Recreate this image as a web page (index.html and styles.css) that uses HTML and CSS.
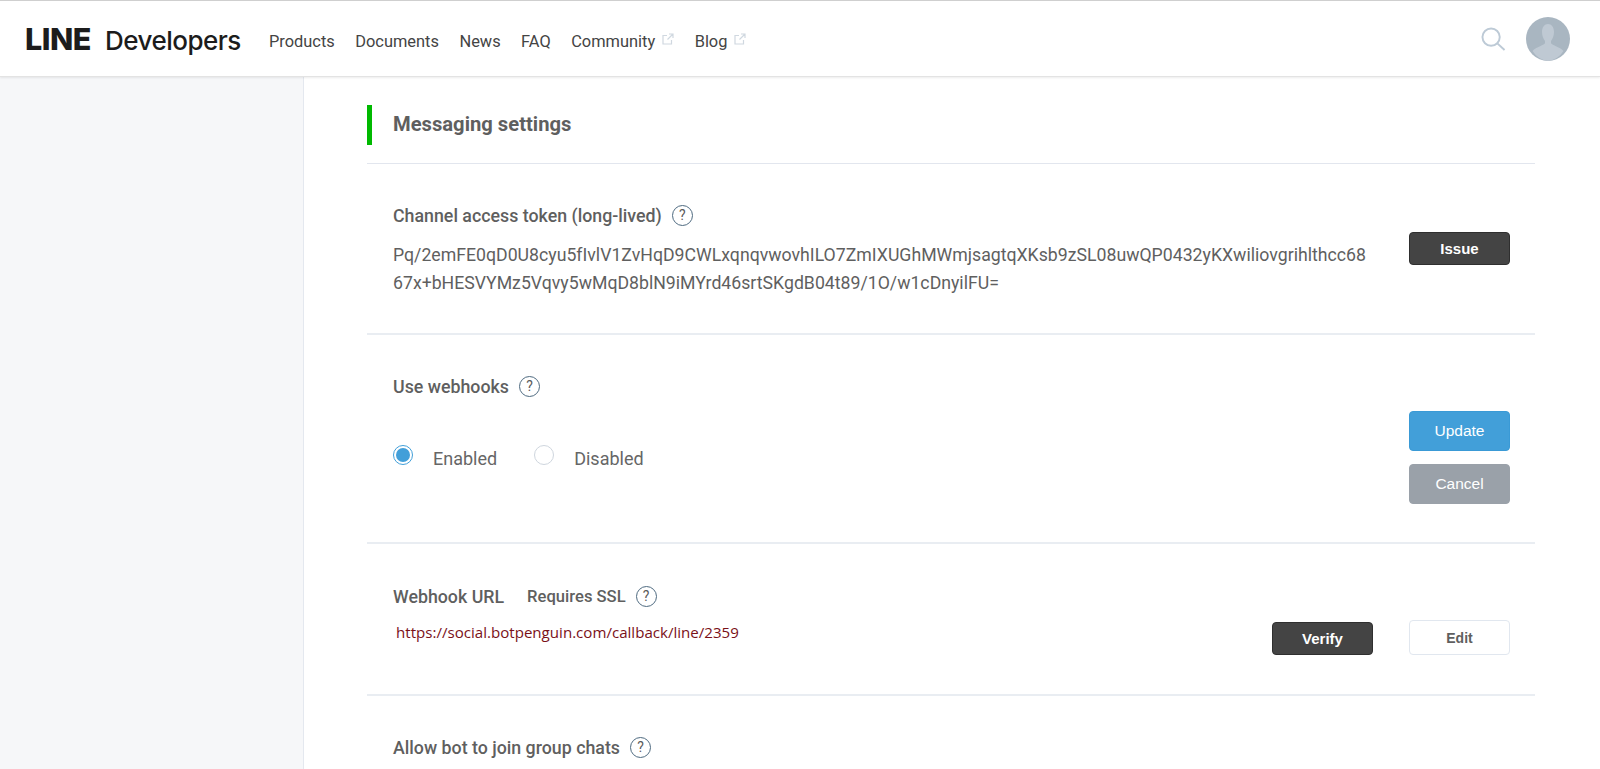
FILE: index.html
```html
<!DOCTYPE html>
<html lang="en">
<head>
<meta charset="utf-8">
<title>LINE Developers</title>
<link rel="stylesheet" href="styles.css">
</head>
<body>
<header class="topbar">
  <div class="brand"><span class="brand-line">LINE</span><span class="brand-dev">Developers</span></div>
  <nav class="nav">
    <a>Products</a>
    <a>Documents</a>
    <a>News</a>
    <a>FAQ</a>
    <a>Community<svg class="ext" viewBox="0 0 12 12"><path d="M5 2.500H1V11h8.500V7M7 1h4v4M11 1 5.500 6.500"/></svg></a>
    <a>Blog<svg class="ext" viewBox="0 0 12 12"><path d="M5 2.500H1V11h8.500V7M7 1h4v4M11 1 5.500 6.500"/></svg></a>
  </nav>
  <div class="top-right">
    <svg class="search" viewBox="0 0 26 26"><circle cx="10.500" cy="10.500" r="9"/><path d="m17 17 7.500 7"/></svg>
    <svg class="avatar" viewBox="0 0 44 44"><circle cx="22" cy="22" r="22" fill="#a9b6c1"/><path fill="#bfc9d3" d="M16 15c0-5 2.500-8 6-8s6 3 6 8c0 4-1.500 7-3 9v2c0 2 9 4 12.500 8A22 22 0 0 1 22 44 22 22 0 0 1 6.500 34C10 30 19 28 19 26v-2c-1.500-2-3-5-3-9z"/></svg>
  </div>
</header>
<div class="layout">
  <aside class="sidebar"></aside>
  <main class="main">
    <h2 class="section-title">Messaging settings</h2>

    <section class="row row-token">
      <div class="row-body">
        <div class="label">Channel access token (long-lived)<span class="help">?</span></div>
        <p class="token">Pq/2emFE0qD0U8cyu5fIvlV1ZvHqD9CWLxqnqvwovhILO7ZmIXUGhMWmjsagtqXKsb9zSL08uwQP0432yKXwiliovgrihlthcc68<br>67x+bHESVYMz5Vqvy5wMqD8blN9iMYrd46srtSKgdB04t89/1O/w1cDnyilFU=</p>
      </div>
      <div class="actions"><button class="btn btn-dark">Issue</button></div>
    </section>

    <section class="row row-hook">
      <div class="row-body">
        <div class="label">Use webhooks<span class="help">?</span></div>
        <div class="radios">
          <span class="radio radio-on"></span><span class="radio-text">Enabled</span>
          <span class="radio"></span><span class="radio-text">Disabled</span>
        </div>
      </div>
      <div class="actions actions-stack">
        <button class="btn btn-blue">Update</button>
        <button class="btn btn-gray">Cancel</button>
      </div>
    </section>

    <section class="row row-url">
      <div class="row-body">
        <div class="label">Webhook URL<span class="ssl">Requires SSL</span><span class="help">?</span></div>
        <p class="url">https://social.botpenguin.com/callback/line/2359</p>
      </div>
      <div class="actions actions-inline">
        <button class="btn btn-dark btn-verify">Verify</button>
        <button class="btn btn-light">Edit</button>
      </div>
    </section>

    <section class="row-last">
      <div class="label">Allow bot to join group chats<span class="help">?</span></div>
    </section>
  </main>
</div>
</body>
</html>
```

FILE: styles.css
```css
* { box-sizing: border-box; }
html, body { margin: 0; height: 769px; overflow: hidden; }
body { font-family: Roboto, "Liberation Sans", sans-serif; background: #fff; color: #5b5b5b; }

.topbar {
  height: 77px;
  border-top: 1px solid #cfcfcf;
  border-bottom: 1px solid #e3e3e3;
  box-shadow: 0 1px 2px rgba(0, 0, 0, .08);
  display: flex;
  align-items: center;
  padding: 0 30px 0 25px;
  background: #fff;
  position: relative;
}
.brand { display: flex; align-items: baseline; width: 244px; color: #1c1c1c; font-family: Inter, sans-serif; }
.brand-line { font-size: 30.5px; font-weight: 800; letter-spacing: -.5px; margin-right: 14px; }
.brand-dev { font-size: 26px; font-weight: 500; letter-spacing: -.5px; }
.nav { display: flex; gap: 20.5px; font-size: 16.4px; color: #444; padding-top: 5px; }
.nav a { display: flex; align-items: flex-start; }
.ext { width: 12px; height: 12px; margin: 1px 0 0 7px; fill: none; stroke: #d0d8e0; stroke-width: 1.200; }
.top-right { margin-left: auto; display: flex; align-items: center; gap: 20px; }
.search { width: 25px; height: 25px; margin-top: 2px; fill: none; stroke: #bdcad6; stroke-width: 2; }
.avatar { width: 44px; height: 44px; display: block; }

.layout { display: flex; height: 692px; }
.sidebar { width: 304px; background: #f6f7f9; border-right: 1px solid #e4e8ef; flex: none; }
.main { width: 1168px; margin-left: 63px; padding-top: 28px; }

.section-title {
  margin: 0 0 1px;
  height: 40px;
  line-height: 39px;
  border-left: 5px solid #00b900;
  padding-left: 21px;
  font-size: 20.200px;
  font-weight: 700;
  color: #5f5f5f;
}
.row { display: flex; justify-content: space-between; border-top: 1px solid #e2e6ee; padding: 0 25px 0 26px; }
.row-body { flex: 1; }
.row-token { margin-top: 18px; height: 170px; padding-top: 39px; }
.row-hook { height: 209px; padding-top: 39px; border-top-width: 2px; border-top-color: #e9edf2; }
.row-url { height: 152px; padding-top: 40px; border-top-width: 2px; border-top-color: #e9edf2; }
.row-last { border-top: 2px solid #e9edf2; padding: 39px 26px 0; }

.label { display: flex; align-items: center; font-size: 17.800px; font-weight: 500; height: 24px; color: #5f5f5f; }
.ssl { margin-left: 23px; font-size: 16.600px; }
.help {
  width: 21px;
  height: 21px;
  margin-left: 10px;
  border: 1.700px solid #4e6a80;
  border-radius: 50%;
  font-size: 14px;
  font-weight: 400;
  line-height: 18px;
  text-align: center;
  color: #5b5b5b;
}
.token { margin: 14px 0 0; font-size: 17.700px; line-height: 28px; color: #5f5f5f; white-space: nowrap; }
.radios { display: flex; align-items: center; margin-top: 46px; height: 28px; font-size: 18px; color: #666; }
.radio { width: 20px; height: 20px; border-radius: 50%; border: 1.200px solid #cfd6de; margin-top: -6px; background: #fff; flex: none; }
.radio-on { border-color: #429fd9; position: relative; }
.radio-on::after { content: ""; position: absolute; inset: 2px; border-radius: 50%; background: #429fd9; }
.radio-text { margin-left: 20px; margin-right: 37px; }
.url { margin: 14px 0 0 3px; font-family: "Open Sans", sans-serif; font-size: 15.100px; line-height: 20px; color: #7a1018; }

.actions { flex: none; width: 101px; }
.actions-stack { display: flex; flex-direction: column; gap: 13px; padding-top: 37px; }
.actions-inline { position: relative; display: flex; justify-content: flex-end; padding-top: 36px; }
.row-token .actions { padding-top: 29px; }

.btn {
  display: block;
  width: 101px;
  padding: 0;
  border-radius: 4px;
  font-family: "Liberation Sans", Arial, sans-serif;
  font-size: 15px;
  cursor: pointer;
}
.btn-dark { height: 33px; background: #444; border: 1px solid #2f2f2f; color: #fff; font-weight: 700; }
.btn-blue { height: 40px; background: #429fd9; border: 1px solid #3a9ad6; color: #fff; font-size: 15.500px; }
.btn-gray { height: 40px; background: #9aa1a9; border: 1px solid #9aa1a9; color: #fff; font-size: 15.500px; }
.btn-light { height: 35px; background: #fff; border: 1px solid #e1e7ef; color: #5f5f5f; font-weight: 700; font-size: 14px; }
.btn-verify { position: absolute; right: 137px; top: 38px; }
```
